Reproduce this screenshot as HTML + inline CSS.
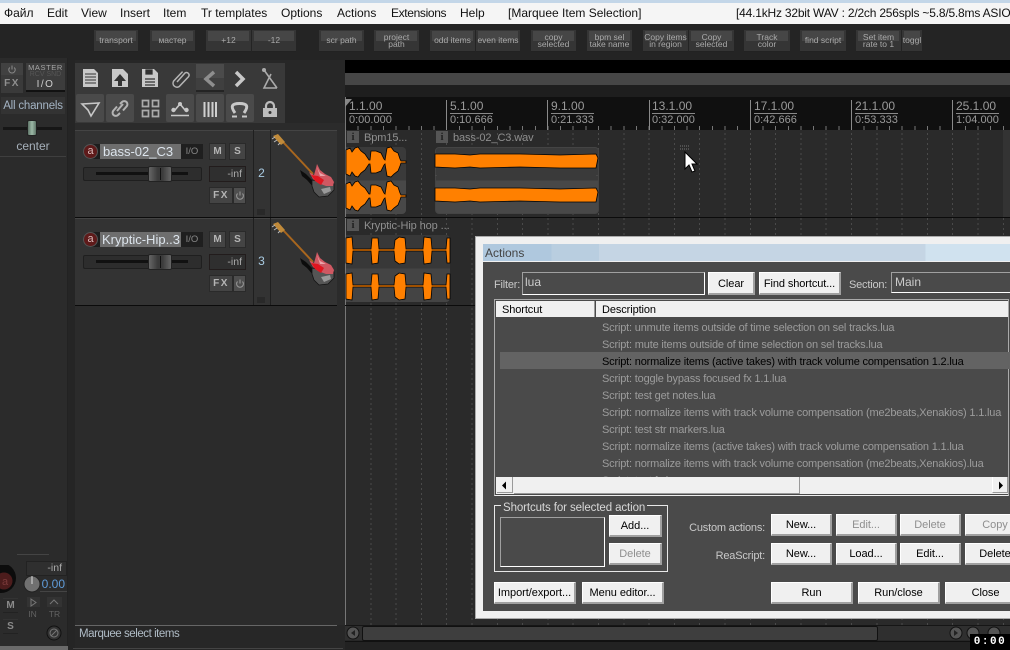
<!DOCTYPE html>
<html><head><meta charset="utf-8"><style>
html,body{margin:0;padding:0;background:#272727}
#r{position:relative;width:1010px;height:650px;overflow:hidden;background:#272727;font-family:"Liberation Sans","Noto Sans CJK SC",sans-serif;font-size:12px}
#r div{position:absolute;box-sizing:border-box;white-space:nowrap}
.m{top:6px;color:#111;font-size:12px;line-height:14px}
.tb{top:30px;height:22px;background:#353535;border-bottom:1px solid #222;color:#aaa;font-size:8.5px;line-height:7.5px;text-align:center;display:flex;align-items:center;justify-content:center;padding-top:1px}
.tb:before{content:"";position:absolute;left:2px;right:2px;top:1px;height:10px;background:#464646}
.tb span{position:relative;white-space:nowrap}
.rl{top:100px;height:30px;width:1px;background:#8a8a8a}
.rt{top:99px;width:43px;color:#9a9a9a;font-size:12px;line-height:14px;border-bottom:1px solid #888;height:15px}
.rb{top:113px;color:#9a9a9a;font-size:11px;line-height:15px}
.bt{background:#f0f0f0;border:1px solid #fff;border-right:2px solid #a0a0a0;border-bottom:2px solid #a0a0a0;color:#000;text-align:center;font-size:11px;line-height:20px;letter-spacing:-.05px}
.dis{color:#8f8f8f}
.row{left:602px;color:#9c9c9c;font-size:11px;line-height:14px;letter-spacing:-.18px}
.lb{color:#c9c9c9;font-size:11px;line-height:14px;letter-spacing:-.2px}
.tr{background:#333;left:75px;width:262px;height:87px;border-top:1px solid #444}
.sq{background:#444;border:1px solid #2a2a2a;color:#b5b5b5;text-align:center;font-size:10px;font-weight:bold;line-height:15px}
.ii{background:#555;color:#222;font-weight:bold;font-family:"Liberation Serif",serif;font-size:11px;line-height:12px;text-align:center;width:12px;height:12px}
.il{color:#8f8f8f;font-size:11px;line-height:14px;letter-spacing:-.1px}
</style></head><body><div id="r">

<div style="left:0;top:0;width:1010px;height:3px;background:#c3d6e8"></div>
<div style="left:0;top:3px;width:1010px;height:21px;background:#f5f5f5"></div>
<div class="m" style="left:4px">Файл</div>
<div class="m" style="left:47px">Edit</div>
<div class="m" style="left:81px">View</div>
<div class="m" style="left:120px">Insert</div>
<div class="m" style="left:163px">Item</div>
<div class="m" style="left:201px">Tr templates</div>
<div class="m" style="left:281px">Options</div>
<div class="m" style="left:337px">Actions</div>
<div class="m" style="left:391px;letter-spacing:-.35px">Extensions</div>
<div class="m" style="left:460px">Help</div>
<div class="m" style="left:508px">[Marquee Item Selection]</div>
<div class="m" style="left:736px;letter-spacing:-.2px">[44.1kHz 32bit WAV : 2/2ch 256spls ~5.8/5.8ms ASIO</div>

<div style="left:0;top:24px;width:1010px;height:36px;background:#242424"></div>
<div class="tb" style="left:94px;width:44px"><span>transport</span></div>
<div class="tb" style="left:150px;width:45px"><span>мастер</span></div>
<div class="tb" style="left:206px;width:45px"><span>+12</span></div>
<div class="tb" style="left:252px;width:44px"><span>-12</span></div>
<div class="tb" style="left:319px;width:45px"><span>scr path</span></div>
<div class="tb" style="left:374px;width:45px"><span>project<br>path</span></div>
<div class="tb" style="left:430px;width:45px"><span>odd items</span></div>
<div class="tb" style="left:476px;width:44px"><span>even items</span></div>
<div class="tb" style="left:531px;width:45px"><span>copy<br>selected</span></div>
<div class="tb" style="left:587px;width:45px"><span>bpm sel<br>take name</span></div>
<div class="tb" style="left:643px;width:45px"><span>Copy items<br>in region</span></div>
<div class="tb" style="left:689px;width:45px"><span>Copy<br>selected</span></div>
<div class="tb" style="left:744px;width:46px"><span>Track<br>color</span></div>
<div class="tb" style="left:800px;width:46px"><span>find script</span></div>
<div class="tb" style="left:856px;width:45px"><span>Set item<br>rate to 1</span></div>
<div class="tb" style="left:902px;width:20px"><span>toggl</span></div>

<!-- Master strip -->
<div style="left:0;top:58px;width:68px;height:592px;background:#2b2b2b;border-right:1px solid #222"></div>
<div style="left:68px;top:60px;width:7px;height:590px;background:#252525"></div>
<div style="left:1px;top:63px;width:22px;height:12px;background:#414141"></div>
<div style="left:1px;top:75px;width:22px;height:18px;background:#3a3a3a;color:#8f8f8f;font-size:10px;font-weight:bold;text-align:center;line-height:17px;letter-spacing:1.5px">FX</div>
<svg style="position:absolute;left:7px;top:63px" width="10" height="12"><path d="M5 2.5v4M2.8 4.5a3.2 3.2 0 1 0 4.4 0" fill="none" stroke="#8a8a8a" stroke-width="1"/></svg>
<div style="left:26px;top:63px;width:39px;height:29px;background:#3c3c3c;border-bottom:2px solid #111"></div>
<div style="left:26px;top:64px;width:39px;text-align:center;color:#a5a5a5;font-size:7.5px;line-height:8px;letter-spacing:.6px">MASTER</div>
<div style="left:26px;top:71px;width:39px;text-align:center;color:#565656;font-size:7px;line-height:8px">RCV SND</div>
<div style="left:26px;top:79px;width:39px;text-align:center;color:#cfcfcf;font-size:10px;line-height:12px;letter-spacing:1.5px">I/O</div>
<div style="left:1px;top:97px;width:64px;height:17px;background:#333;color:#a4b4c4;font-size:11.5px;line-height:18px;text-align:center;letter-spacing:-.2px">All channels</div>
<div style="left:3px;top:127px;width:59px;height:3px;background:#161616"></div>
<div style="left:27px;top:120px;width:10px;height:16px;background:linear-gradient(90deg,#5f7568,#9bb8a6 50%,#5f7568);border:1px solid #222;border-radius:2px"></div>
<div style="left:0;top:139px;width:66px;text-align:center;color:#a6b0ba;font-size:12px;line-height:14px">center</div>
<div style="left:0;top:156px;width:66px;height:1px;background:#3f3f3f"></div>
<div style="left:17px;top:554px;width:32px;height:1px;background:#444"></div>

<!-- Main toolbar -->
<div style="left:75px;top:63px;width:210px;height:60px;background:#393939"></div>
<div style="left:196px;top:64px;width:28px;height:27px;background:#3f3f3f"></div>
<div style="left:196px;top:64px;width:28px;height:14px;background:#4b4b4b"></div>
<div style="left:196px;top:90px;width:28px;height:2px;background:#242424"></div>
<div style="left:76px;top:94px;width:28px;height:28px;background:#4a4a4a;border-radius:2px"></div>
<div style="left:106px;top:94px;width:28px;height:28px;background:#4a4a4a;border-radius:2px"></div>
<div style="left:166px;top:94px;width:28px;height:28px;background:#4a4a4a;border-radius:2px"></div>
<div style="left:196px;top:94px;width:28px;height:28px;background:#4a4a4a;border-radius:2px"></div>
<div style="left:226px;top:94px;width:28px;height:28px;background:#4a4a4a;border-radius:2px"></div>
<svg style="position:absolute;left:75px;top:63px" width="210" height="60" fill="none" stroke="#c8c8c8" stroke-width="2">
<path d="M8 6h11l4 4v14h-15z" fill="#c8c8c8" stroke="none"/><path d="M10 11h11M10 14h11M10 17h11M10 20h11" stroke="#333" stroke-width="1"/>
<path d="M37 6h11l5 5v13h-16z" fill="#c8c8c8" stroke="none"/><path d="M45 11l-6 7h4v5h4v-5h4z" fill="#333" stroke="none"/>
<path d="M67 6h12l4 4v14h-16z" fill="#c8c8c8" stroke="none"/><path d="M71 7h6v4h-6zM70 16h10M70 19h10M70 22h10" stroke="#333" stroke-width="1.3" fill="#333"/>
<path d="M102 19l8-9a2.6 2.6 0 0 1 3.6 3.6l-9.5 10a4 4 0 0 1-5.5-5.5l9-9.5" stroke="#b4b4b4" stroke-width="1.5"/>
<path d="M139 9l-8 7 8 7" stroke="#8e8e8e" stroke-width="3.5"/>
<path d="M161 9l7 7-7 7" stroke="#c8c8c8" stroke-width="3.5"/>
<path d="M189 7l13 18M196 11l-7 14h13" stroke="#aaa" stroke-width="1.6"/><circle cx="189" cy="7" r="2" fill="#aaa" stroke="none"/>
<path d="M7 41l17-1-8 13-3-6z" stroke-width="1.6"/>
<path d="M42 48l6-7M45 50l-2 2a3 3 0 0 1-4.5-4.5l3.5-4M45 41l2-2a3 3 0 0 1 4.5 4.5l-3.5 4" stroke="#b4b4b4" stroke-width="2"/>
<path d="M67.5 37.5h6v6h-6zM77.5 37.5h6v6h-6zM67.5 47.5h6v6h-6zM77.5 47.5h6v6h-6z" stroke="#aaa" stroke-width="1.7"/>
<path d="M100 47l5-6 5 6" stroke-width="1.6"/><circle cx="105" cy="41" r="2" fill="#c8c8c8" stroke="none"/><circle cx="98.5" cy="47" r="2.2" fill="#c8c8c8" stroke="none"/><circle cx="111.5" cy="47" r="2.2" fill="#c8c8c8" stroke="none"/><path d="M96 52.5h18" stroke-width="1.6"/>
<path d="M129.5 39v15M133.5 39v15M137.5 39v15M141 39v15" stroke="#d0d0d0" stroke-width="2"/>
<path d="M160 50C155 43 157 40.5 164.5 40.5C172 40.5 174 43 169 50" stroke-width="3"/><path d="M157 53.5h5M167 53.5h5" stroke-width="2"/>
<path d="M191 46v-3a4 4 0 0 1 8 0v3" stroke="#bcbcbc" stroke-width="2.2"/><rect x="188" y="45" width="14" height="9" fill="#bcbcbc" stroke="none"/><circle cx="195" cy="49.5" r="1.5" fill="#333" stroke="none"/>
</svg>

<!-- Track panels -->
<div style="left:75px;top:123px;width:270px;height:502px;background:#2b2b2b"></div>
<div class="tr" style="top:130px"></div>
<div style="left:75px;top:217px;width:262px;height:1px;background:#0b0b0b"></div>
<div class="tr" style="top:218px"></div>
<div style="left:75px;top:305px;width:262px;height:1px;background:#0b0b0b"></div>

<!-- track 2 -->
<div style="left:83px;top:144px;width:98px;height:15px;background:#1d1d1d;border-radius:8px 0 0 8px"></div>
<div style="left:100px;top:144px;width:81px;height:15px;background:#6e6e6e;color:#dce4ec;font-size:13px;line-height:15px;padding-left:3px">bass-02_C3</div>
<div style="left:83px;top:144px;width:15px;height:15px;border-radius:50%;background:#5e1a1a;border:1px solid #555;color:#d8b8b8;font-size:11px;line-height:12px;text-align:center">a</div>
<div style="left:181px;top:144px;width:22px;height:15px;background:#1f1f1f;color:#888;font-size:9.5px;line-height:15px;text-align:center">I/O</div>
<div class="sq" style="left:209px;top:143px;width:17px;height:17px">M</div>
<div class="sq" style="left:229px;top:143px;width:17px;height:17px">S</div>
<div style="left:83px;top:167px;width:119px;height:14px;background:#2d2d2d;border:1px solid #1f1f1f;border-radius:2px"></div>
<div style="left:96px;top:172px;width:92px;height:3px;background:#111"></div>
<div style="left:148px;top:166px;width:24px;height:16px;background:linear-gradient(90deg,#666,#3a3a3a 40%,#3a3a3a 60%,#666);border:1px solid #222;border-radius:2px"></div>
<div style="left:160px;top:168px;width:1px;height:12px;background:#111"></div>
<div style="left:209px;top:166px;width:37px;height:16px;background:#2f2f2f;border:1px solid #221c1c;color:#aaa;font-size:10.5px;line-height:14px;text-align:right;padding-right:3px">-inf</div>
<div class="sq" style="left:209px;top:187px;width:24px;height:17px;letter-spacing:1.5px">FX</div>
<div class="sq" style="left:233px;top:187px;width:13px;height:17px;background:#4e4e4e"></div>
<svg style="position:absolute;left:235px;top:190px" width="10" height="11"><path d="M5 1.5v4M2.5 3.5a3.4 3.4 0 1 0 5 0" fill="none" stroke="#999"/></svg>
<div style="left:253px;top:130px;width:1px;height:87px;background:#1f1f1f"></div>
<div style="left:270px;top:130px;width:1px;height:87px;background:#1f1f1f"></div>
<div style="left:253px;top:166px;width:17px;text-align:center;color:#a9cbe2;font-size:12px;line-height:14px">2</div>
<div style="left:257px;top:209px;width:8px;height:6px;background:#292929"></div>

<!-- track 3 -->
<div style="left:83px;top:232px;width:98px;height:15px;background:#1d1d1d;border-radius:8px 0 0 8px"></div>
<div style="left:100px;top:232px;width:81px;height:15px;background:#6e6e6e;color:#dce4ec;font-size:13px;line-height:15px;padding-left:2px;overflow:hidden">Kryptic-Hip..3</div>
<div style="left:83px;top:232px;width:15px;height:15px;border-radius:50%;background:#5e1a1a;border:1px solid #555;color:#d8b8b8;font-size:11px;line-height:12px;text-align:center">a</div>
<div style="left:181px;top:232px;width:22px;height:15px;background:#1f1f1f;color:#888;font-size:9.5px;line-height:15px;text-align:center">I/O</div>
<div class="sq" style="left:209px;top:231px;width:17px;height:17px">M</div>
<div class="sq" style="left:229px;top:231px;width:17px;height:17px">S</div>
<div style="left:83px;top:255px;width:119px;height:14px;background:#2d2d2d;border:1px solid #1f1f1f;border-radius:2px"></div>
<div style="left:96px;top:260px;width:92px;height:3px;background:#111"></div>
<div style="left:148px;top:254px;width:24px;height:16px;background:linear-gradient(90deg,#666,#3a3a3a 40%,#3a3a3a 60%,#666);border:1px solid #222;border-radius:2px"></div>
<div style="left:160px;top:256px;width:1px;height:12px;background:#111"></div>
<div style="left:209px;top:254px;width:37px;height:16px;background:#2f2f2f;border:1px solid #221c1c;color:#aaa;font-size:10.5px;line-height:14px;text-align:right;padding-right:3px">-inf</div>
<div class="sq" style="left:209px;top:275px;width:24px;height:17px;letter-spacing:1.5px">FX</div>
<div class="sq" style="left:233px;top:275px;width:13px;height:17px;background:#4e4e4e"></div>
<svg style="position:absolute;left:235px;top:278px" width="10" height="11"><path d="M5 1.5v4M2.5 3.5a3.4 3.4 0 1 0 5 0" fill="none" stroke="#999"/></svg>
<div style="left:253px;top:218px;width:1px;height:87px;background:#1f1f1f"></div>
<div style="left:270px;top:218px;width:1px;height:87px;background:#1f1f1f"></div>
<div style="left:253px;top:254px;width:17px;text-align:center;color:#a9cbe2;font-size:12px;line-height:14px">3</div>
<div style="left:257px;top:297px;width:8px;height:6px;background:#292929"></div>

<!-- guitars -->
<svg style="position:absolute;left:270px;top:130px" width="68" height="176">
<defs><g id="g">
<path d="M13 12L43 44" stroke="#a8661e" stroke-width="2"/>
<path d="M3 6l5-2 7 8-4 3z" fill="#c08a3a"/><path d="M2 9l3-2M4 12l3-2M8 15l2-2" stroke="#bbb" stroke-width="1"/>
<path d="M30 40L36 44L42 50L44 58L37 50L32 46z" fill="#0c0c0c"/>
<path d="M42 50L47 51L56 55L64 54L64 60L58 66L49 67L44 62L42 56Z" fill="#555" stroke="#141414" stroke-width=".8"/>
<path d="M39 42L44 45L46 38L47 34L50 40L55 44L61 47L64 52L63 56L56 56L48 53L43 49Z" fill="#cf5862"/>
<path d="M41 45L48 46L54 50L51 55L45 51Z" fill="#e01620"/>
<path d="M51 59L60 57L61 61L54 64Z" fill="#9a9a9a"/>
<path d="M47 37L50 43L56 46L50 46Z" fill="#eaa5aa"/>
</g></defs>
<use href="#g" x="0" y="0"/><use href="#g" x="0" y="88"/></svg>

<!-- Master bottom -->
<div style="left:26px;top:561px;width:41px;height:15px;background:#2f2f2f;border:1px solid #222;color:#aaa;font-size:10.5px;line-height:13px;text-align:right;padding-right:4px">-inf</div>
<svg style="position:absolute;left:0;top:565px" width="68" height="85">
<circle cx="1" cy="13" r="15" fill="#0c0c0c"/><circle cx="4" cy="16" r="8.5" fill="#4c1c1c"/>
<circle cx="32" cy="19" r="8" fill="#707070" stroke="#222"/><path d="M32 19v-8" stroke="#ddd"/>
<path d="M27 32h13v10H27zM47 32h15v10H47z" fill="#333"/><path d="M31 34l5 3.5-5 3.5z" fill="none" stroke="#777"/><path d="M50 39l4-4 4 4" fill="none" stroke="#777"/>
<circle cx="54" cy="68" r="7" fill="#333" stroke="#111"/><circle cx="54" cy="68" r="4" fill="none" stroke="#777"/><path d="M51 71l6-6" stroke="#777"/>
<text x="2" y="20" font-size="11" fill="#7a3a3a" font-family="Liberation Sans">a</text>
</svg>
<div style="left:40px;top:577px;width:27px;height:15px;color:#5f9bd8;font-size:12px;line-height:15px;border-bottom:1px solid #444;text-align:right;padding-right:2px">0.00</div>
<div style="left:3px;top:598px;width:15px;height:15px;border-top:1px solid #333;border-bottom:1px solid #222;color:#8a8a8a;font-size:10px;font-weight:bold;line-height:14px;text-align:center">M</div>
<div style="left:3px;top:619px;width:15px;height:15px;border-top:1px solid #333;border-bottom:1px solid #222;color:#8a8a8a;font-size:10px;font-weight:bold;line-height:14px;text-align:center">S</div>
<div style="left:25px;top:609px;width:15px;text-align:center;color:#626262;font-size:8.5px;line-height:10px">IN</div>
<div style="left:47px;top:609px;width:15px;text-align:center;color:#626262;font-size:8.5px;line-height:10px">TR</div>
<div style="left:0;top:646px;width:68px;height:4px;background:#6a6a6a"></div>

<div style="left:75px;top:625px;width:262px;height:1px;background:#666"></div>
<div style="left:79px;top:627px;color:#b0bcc6;font-size:11.5px;line-height:14px;letter-spacing:-.45px">Marquee select items</div>
<div style="left:73px;top:648px;width:270px;height:1px;background:#444"></div>

<!-- Arrange -->
<div style="left:345px;top:60px;width:665px;height:13px;background:#000"></div>
<div style="left:345px;top:73px;width:665px;height:12px;background:#464646"></div>
<div style="left:345px;top:85px;width:665px;height:12px;background:#1e1e1e"></div>
<div style="left:345px;top:97px;width:665px;height:33px;background:#101010"></div>
<div style="left:345px;top:126px;width:665px;height:4px;background:repeating-linear-gradient(90deg,#777 0,#777 1px,transparent 1px,transparent 12.65px)"></div>
<div style="left:345px;top:130px;width:665px;height:495px;background:#2a2a2a"></div>
<div style="left:345px;top:130px;width:665px;height:495px;background:repeating-linear-gradient(90deg,#4a4a4a 0,#4a4a4a 1px,transparent 1px,transparent 25.3px);-webkit-mask:repeating-linear-gradient(0deg,#000 0,#000 2px,transparent 2px,transparent 5px);mask:repeating-linear-gradient(0deg,#000 0,#000 2px,transparent 2px,transparent 5px)"></div>
<div style="left:345px;top:97px;width:1px;height:528px;background:#777"></div>
<div style="left:345px;top:217px;width:665px;height:1px;background:#0b0b0b"></div>
<div style="left:345px;top:305px;width:665px;height:1px;background:#0b0b0b"></div>
<div style="left:1003px;top:130px;width:7px;height:87px;background:#333"></div>

<svg style="position:absolute;left:345px;top:99px" width="8" height="9"><path d="M0 8V0h7z" fill="#888"/></svg>
<div class="rl" style="left:446px"></div><div class="rl" style="left:547px"></div><div class="rl" style="left:649px"></div><div class="rl" style="left:750px"></div><div class="rl" style="left:851px"></div><div class="rl" style="left:952px"></div>
<div class="rt" style="left:349px">1.1.00</div><div class="rb" style="left:349px">0:00.000</div>
<div class="rt" style="left:450px">5.1.00</div><div class="rb" style="left:450px">0:10.666</div>
<div class="rt" style="left:551px">9.1.00</div><div class="rb" style="left:551px">0:21.333</div>
<div class="rt" style="left:652px">13.1.00</div><div class="rb" style="left:652px">0:32.000</div>
<div class="rt" style="left:754px">17.1.00</div><div class="rb" style="left:754px">0:42.666</div>
<div class="rt" style="left:855px">21.1.00</div><div class="rb" style="left:855px">0:53.333</div>
<div class="rt" style="left:956px">25.1.00</div><div class="rb" style="left:956px">1:04.000</div>

<!-- Items -->
<div style="left:346px;top:147px;width:60px;height:67px;background:linear-gradient(#3a3a3a 50%,#484848 50%);border-radius:0 4px 4px 0"></div>
<div style="left:435px;top:147px;width:164px;height:67px;background:linear-gradient(#3a3a3a 50%,#484848 50%);border-radius:4px;border:1px solid #444"></div>
<div style="left:346px;top:235px;width:104px;height:67px;background:linear-gradient(#383838 50%,#444 50%);border-radius:0 4px 4px 0"></div>
<div class="ii" style="left:347px;top:131px">i</div>
<div class="ii" style="left:436px;top:131px">i</div>
<div class="ii" style="left:347px;top:219px">i</div>
<div class="il" style="left:364px;top:131px">Bpm15...</div>
<div class="il" style="left:453px;top:131px">bass-02_C3.wav</div>
<div class="il" style="left:364px;top:219px">Kryptic-Hip hop ...</div>

<svg style="position:absolute;left:0;top:0" width="1010" height="320">
<defs>
<path id="a" d="M346 -12L350 -14L352 -10L355 -14L358 -15L361 -11L365 -8L369 -2L370 -2L371 -11L376 -11L381 -9L384 -3L385 -2L387 -14L391 -15L394 -11L398 -9L400 -3L401 -1L406 -1L406 1L401 1L400 4L398 9L394 12L391 15L387 14L385 2L384 3L381 9L376 11L371 11L370 2L369 2L365 8L361 11L358 15L355 14L352 10L350 14L346 12Z"/>
<path id="b" d="M435 -7L455 -7L470 -6L480 -7L520 -7L560 -6L596 -7L598 -3L597 2L596 7L560 7L520 6L480 7L470 6L455 7L435 6Z"/>
<path id="c" d="M346 -12L352 -13L353 -1L371 -1L372 -12L378 -12L379 -1L394 -1L395 -10L399 -13L405 -12L406 -1L423 -1L424 -13L431 -12L432 -1L446 -1L447 -12L450 -12L450 13L447 13L446 1L432 1L431 13L424 14L423 1L406 1L405 13L399 14L395 11L394 1L379 1L378 13L372 14L371 1L353 1L352 14L346 13Z"/>
</defs>
<g fill="#ff8000" stroke="#000" stroke-width=".8">
<use href="#a" y="162"/><use href="#a" y="196"/>
<use href="#b" y="161"/><use href="#b" y="195"/>
<use href="#c" y="250"/><use href="#c" y="286"/>
</g>
<path d="M436 176v-1M597 176v-1" stroke="#555"/>
<path d="M680 146h10M680 149h10" stroke="#777" stroke-dasharray="1 1"/>
<path d="M685 152v17l4-4 3 7 3-1-3-7h5z" fill="#fff" stroke="#000"/>
</svg>

<!-- Actions dialog -->
<div style="left:475px;top:236px;width:535px;height:383px;background:#f0f0f0;border:1px solid #aaa;border-right:0"></div>
<div style="left:483px;top:244px;width:527px;height:17px;background:linear-gradient(90deg,#afc8de 0,#afc8de 13%,#b9cee0 13%,#b9cee0 22%,#c5d5e4 22%,#c5d5e4 84%,#d0e2ef 84%)"></div>
<div style="left:485px;top:246px;color:#444;font-size:12px;line-height:14px">Actions</div>
<div style="left:483px;top:262px;width:527px;height:349px;background:#4a4a4a"></div>

<div class="lb" style="left:494px;top:278px">Filter:</div>
<div style="left:522px;top:272px;width:183px;height:23px;background:#4a4a4a;border:1px solid #fff;border-top-color:#a0a0a0;border-left-color:#a0a0a0;color:#ccc;font-size:12px;line-height:18px;padding-left:2px">lua</div>
<div class="bt" style="left:708px;top:272px;width:47px;height:23px;line-height:22px">Clear</div>
<div class="bt" style="left:759px;top:272px;width:82px;height:23px;line-height:22px;letter-spacing:-.1px">Find shortcut...</div>
<div class="lb" style="left:849px;top:278px">Section:</div>
<div style="left:891px;top:272px;width:120px;height:21px;background:#4a4a4a;border:1px solid #fff;border-top-color:#a0a0a0;border-left-color:#a0a0a0;color:#ccc;font-size:12px;line-height:19px;padding-left:3px">Main</div>

<div style="left:494px;top:299px;width:515px;height:197px;border:1px solid #aaa;border-bottom-color:#eee"></div>
<div style="left:496px;top:301px;width:99px;height:16px;background:#f0f0f0;border-right:1px solid #999;color:#000;font-size:11px;line-height:19px;padding-left:6px;letter-spacing:-.1px">Shortcut</div>
<div style="left:596px;top:301px;width:412px;height:16px;background:#f0f0f0;color:#000;font-size:11px;line-height:19px;padding-left:6px;letter-spacing:-.1px">Description</div>
<div style="left:500px;top:352px;width:510px;height:17px;background:#636363"></div>
<div class="row" style="top:321px">Script: unmute items outside of time selection on sel tracks.lua</div>
<div class="row" style="top:338px">Script: mute items outside of time selection on sel tracks.lua</div>
<div class="row" style="top:355px;color:#000">Script: normalize items (active takes) with track volume compensation 1.2.lua</div>
<div class="row" style="top:372px">Script: toggle bypass focused fx 1.1.lua</div>
<div class="row" style="top:389px">Script: test get notes.lua</div>
<div class="row" style="top:406px">Script: normalize items with track volume compensation (me2beats,Xenakios) 1.1.lua</div>
<div class="row" style="top:423px">Script: test str markers.lua</div>
<div class="row" style="top:440px">Script: normalize items (active takes) with track volume compensation 1.1.lua</div>
<div class="row" style="top:457px">Script: normalize items with track volume compensation (me2beats,Xenakios).lua</div>
<div class="row" style="top:474px">Script: test fx.lua</div>
<div style="left:496px;top:477px;width:512px;height:17px;background:#f0f0f0"></div>
<div style="left:497px;top:477px;width:16px;height:16px;background:#f0f0f0;border-right:1px solid #999;border-bottom:1px solid #999"></div>
<div style="left:514px;top:477px;width:286px;height:17px;background:#f0f0f0;border-right:1px solid #999;border-bottom:1px solid #999"></div>
<div style="left:992px;top:477px;width:16px;height:16px;background:#f0f0f0;border-left:1px solid #fff;border-right:1px solid #999;border-bottom:1px solid #999"></div>
<svg style="position:absolute;left:497px;top:477px" width="512" height="17"><path d="M5 8.5l4-4v8zM506 8.5l-4-4v8z" fill="#000"/></svg>

<div style="left:494px;top:505px;width:174px;height:67px;border:1px solid #e8e8e8"></div>
<div class="lb" style="left:501px;top:501px;background:#4a4a4a;padding:0 2px;color:#d8d8d8;font-size:11.5px;letter-spacing:-.1px">Shortcuts for selected action</div>
<div style="left:500px;top:517px;width:105px;height:50px;background:#4a4a4a;border:1px solid #fff;border-top-color:#a0a0a0;border-left-color:#a0a0a0"></div>
<div class="bt" style="left:609px;top:515px;width:53px;height:22px">Add...</div>
<div class="bt dis" style="left:609px;top:543px;width:53px;height:22px">Delete</div>
<div class="bt" style="left:494px;top:582px;width:82px;height:22px">Import/export...</div>
<div class="bt" style="left:582px;top:582px;width:82px;height:22px">Menu editor...</div>

<div class="lb" style="left:665px;width:100px;top:521px;text-align:right">Custom actions:</div>
<div class="lb" style="left:665px;width:100px;top:549px;text-align:right">ReaScript:</div>
<div class="bt" style="left:771px;top:514px;width:61px;height:22px">New...</div>
<div class="bt dis" style="left:836px;top:514px;width:61px;height:22px">Edit...</div>
<div class="bt dis" style="left:900px;top:514px;width:61px;height:22px">Delete</div>
<div class="bt dis" style="left:965px;top:514px;width:61px;height:22px">Copy</div>
<div class="bt" style="left:771px;top:543px;width:61px;height:22px">New...</div>
<div class="bt" style="left:836px;top:543px;width:61px;height:22px">Load...</div>
<div class="bt" style="left:900px;top:543px;width:61px;height:22px">Edit...</div>
<div class="bt" style="left:965px;top:543px;width:61px;height:22px">Delete</div>
<div class="bt" style="left:771px;top:582px;width:82px;height:22px">Run</div>
<div class="bt" style="left:858px;top:582px;width:82px;height:22px">Run/close</div>
<div class="bt" style="left:945px;top:582px;width:82px;height:22px">Close</div>

<!-- Bottom scrollbar -->
<div style="left:345px;top:625px;width:665px;height:1px;background:#161616"></div>
<div style="left:345px;top:626px;width:665px;height:14px;background:#2f2f2f"></div>
<div style="left:362px;top:626px;width:516px;height:15px;background:#3e3e3e;border:1px solid #111;border-radius:2px"></div>
<div style="left:345px;top:641px;width:665px;height:1px;background:#111"></div>
<div style="left:345px;top:642px;width:665px;height:8px;background:#222"></div>
<svg style="position:absolute;left:345px;top:625px" width="665" height="18"><circle cx="8" cy="8" r="6" fill="#555" stroke="#111"/><path d="M10 5l-4 3 4 3z" fill="#222"/><circle cx="611" cy="8" r="6" fill="#555" stroke="#111"/><path d="M609 5l4 3-4 3z" fill="#222"/><circle cx="628" cy="8" r="6" fill="#555" stroke="#111"/><circle cx="649" cy="8" r="6" fill="#555" stroke="#111"/></svg>
<div style="left:970px;top:634px;width:40px;height:16px;background:#000;color:#fff;font-family:'Liberation Mono',monospace;font-weight:bold;font-size:11px;line-height:16px;text-align:center;letter-spacing:1.5px">0:00</div>

</div></body></html>
